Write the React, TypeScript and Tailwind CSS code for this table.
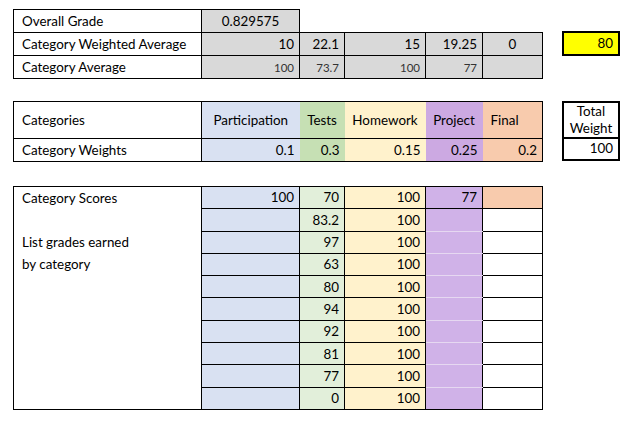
import React from "react";

// column widths shared by the three tables
const Cols = () => (
  <colgroup>
    <col className="w-[188px]" />
    <col className="w-[98px]" />
    <col className="w-[45px]" />
    <col className="w-[81px]" />
    <col className="w-[57px]" />
    <col className="w-[60px]" />
  </colgroup>
);

const testScores = ["83.2", "97", "63", "80", "94", "92", "81", "77", "0"];

const App = () => {
  return (
    <div className="w-[639px] h-[422px] bg-white text-black text-[13.4px] leading-none [font-family:Lato,'Liberation_Sans',sans-serif] pl-[13px] pt-[9px]">
      {/* Overall grade block */}
      <div className="flex items-start">
        <table className="table-fixed border-collapse w-[529px]">
          <Cols />
          <tbody>
            <tr className="h-[23px]">
              <td className="border border-black px-2 pt-px">Overall Grade</td>
              <td className="border border-black bg-[#d9d9d9] text-center pt-px">0.829575</td>
              <td />
              <td />
              <td />
              <td />
            </tr>
            <tr className="h-[23px]">
              <td className="border border-black px-2 pt-px">Category Weighted Average</td>
              <td className="border border-black bg-[#d9d9d9] text-right pr-[5px] pt-px">10</td>
              <td className="border border-black bg-[#d9d9d9] text-right pr-[5px] pt-px">22.1</td>
              <td className="border border-black bg-[#d9d9d9] text-right pr-[5px] pt-px">15</td>
              <td className="border border-black bg-[#d9d9d9] text-right pr-[5px] pt-px">19.25</td>
              <td className="border border-black bg-[#d9d9d9] text-center pt-px">0</td>
            </tr>
            <tr className="h-[23px]">
              <td className="border border-black px-2 pt-px">Category Average</td>
              <td className="border border-black bg-[#d9d9d9] text-right pr-[5px] pt-px text-[11.5px] text-[#333]">100</td>
              <td className="border border-black bg-[#d9d9d9] text-right pr-[5px] pt-px text-[11.5px] text-[#333]">73.7</td>
              <td className="border border-black bg-[#d9d9d9] text-right pr-[5px] pt-px text-[11.5px] text-[#333]">100</td>
              <td className="border border-black bg-[#d9d9d9] text-right pr-[5px] pt-px text-[11.5px] text-[#333]">77</td>
              <td className="border border-black bg-[#d9d9d9]" />
            </tr>
          </tbody>
        </table>
        <div className="ml-[19px] mt-[22px] w-[58px] h-[25px] border-2 border-black bg-[#ffff00] flex items-center justify-end pr-[5px]">
          80
        </div>
      </div>

      {/* Categories and weights */}
      <div className="flex items-start mt-[22px]">
        <table className="table-fixed border-collapse w-[529px]">
          <Cols />
          <tbody>
            <tr className="h-[37px]">
              <td className="border border-black px-2 pt-px">Categories</td>
              <td className="border-y border-l border-black bg-[#d9e1f2] text-center pt-px">Participation</td>
              <td className="border-y border-black bg-[#c6e0b4] text-center pt-px">Tests</td>
              <td className="border-y border-black bg-[#fff2cc] text-center pt-px">Homework</td>
              <td className="border-y border-black bg-[#cca9e2] text-center pt-px">Project</td>
              <td className="border-y border-r border-black bg-[#f8cbad] pl-2 pt-px">Final</td>
            </tr>
            <tr className="h-[23px]">
              <td className="border border-black px-2 pt-px">Category Weights</td>
              <td className="border-y border-l border-black bg-[#d9e1f2] text-right pr-[5px] pt-px">0.1</td>
              <td className="border-y border-black bg-[#c6e0b4] text-right pr-[5px] pt-px">0.3</td>
              <td className="border-y border-black bg-[#fff2cc] text-right pr-[5px] pt-px">0.15</td>
              <td className="border-y border-black bg-[#cca9e2] text-right pr-[5px] pt-px">0.25</td>
              <td className="border-y border-r border-black bg-[#f8cbad] text-right pr-[5px] pt-px">0.2</td>
            </tr>
          </tbody>
        </table>
        <div className="ml-[19px] w-[58px] h-[60px] border-2 border-black flex flex-col">
          <div className="h-[36px] border-b-2 border-black flex items-center justify-center text-center leading-[17px]">
            Total Weight
          </div>
          <div className="flex-1 flex items-center justify-end pr-[5px]">100</div>
        </div>
      </div>

      {/* Scores by category */}
      <table className="table-fixed border-collapse w-[529px] mt-[24px]">
        <Cols />
        <tbody>
          <tr className="h-[22.3px]">
            <td className="border-x border-t border-black px-2 pt-px">Category Scores</td>
            <td className="border border-black bg-[#d9e1f2] text-right pr-[5px] pt-px">100</td>
            <td className="border border-black bg-[#e2efda] text-right pr-[5px] pt-px">70</td>
            <td className="border border-black bg-[#fff2cc] text-right pr-[5px] pt-px">100</td>
            <td className="border border-black bg-[#d0b2e8] text-right pr-[5px] pt-px">77</td>
            <td className="border border-black bg-[#f8cbad]" />
          </tr>
          {testScores.map((score, i) => (
            <tr key={i} className="h-[22.3px]">
              <td
                className={
                  i === testScores.length - 1
                    ? "border-x border-b border-black px-2 pt-px"
                    : "border-x border-black px-2 pt-px"
                }
              >
                {i === 1 ? "List grades earned" : i === 2 ? "by category" : ""}
              </td>
              <td className="border border-black bg-[#d9e1f2]" />
              <td className="border border-black bg-[#e2efda] text-right pr-[5px] pt-px">{score}</td>
              <td className="border border-black bg-[#fff2cc] text-right pr-[5px] pt-px">100</td>
              <td
                className={
                  i === testScores.length - 1
                    ? "border-x border-b border-black bg-[#d0b2e8]"
                    : "border-x border-b border-x-black border-b-[#e6d8f1] bg-[#d0b2e8]"
                }
              />
              <td className="border border-black bg-white" />
            </tr>
          ))}
        </tbody>
      </table>
    </div>
  );
};

export default App;
